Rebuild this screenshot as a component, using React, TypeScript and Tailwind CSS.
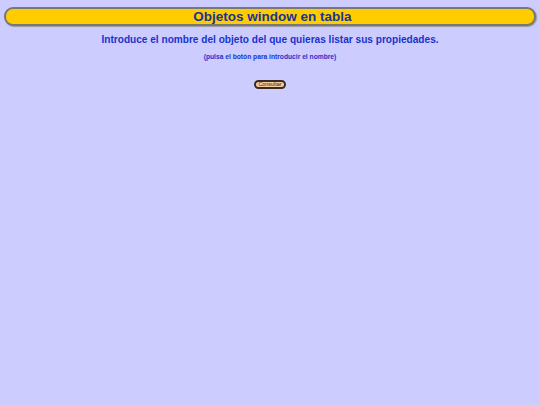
import React from "react";

export default function App() {
  return (
    <div className="min-h-[405px] w-full bg-[#ccccff] pt-[7px] px-[4px]" style={{ fontFamily: '"Liberation Sans", Arial, sans-serif' }}>
      <div className="h-[19px] rounded-[9px] border-2 border-[#777777] bg-[#ffcc00] flex items-center justify-center pl-[5px] shadow-[1px_1px_1px_#999]">
        <h1 className="text-[13.5px] font-bold text-[#1a3399] leading-none">Objetos window en tabla</h1>
      </div>
      <p className="mt-[7px] text-center text-[10.1px] font-bold text-[#1a33cc] leading-[13px]">
        Introduce el nombre del objeto del que quieras listar sus propiedades.
      </p>
      <p className="mt-[6px] text-center text-[6.7px] font-bold text-[#1a33cc] leading-[9px]">
        (pulsa el botón para introducir el nombre)
      </p>
      <div className="mt-[19px] flex justify-center">
        <button className="h-[9px] px-[2px] rounded-[5px] border-2 border-[#3a2a22] bg-[#f8cc9c] text-[5.4px] leading-none text-[#222] flex items-center">
          Consultar
        </button>
      </div>
    </div>
  );
}
